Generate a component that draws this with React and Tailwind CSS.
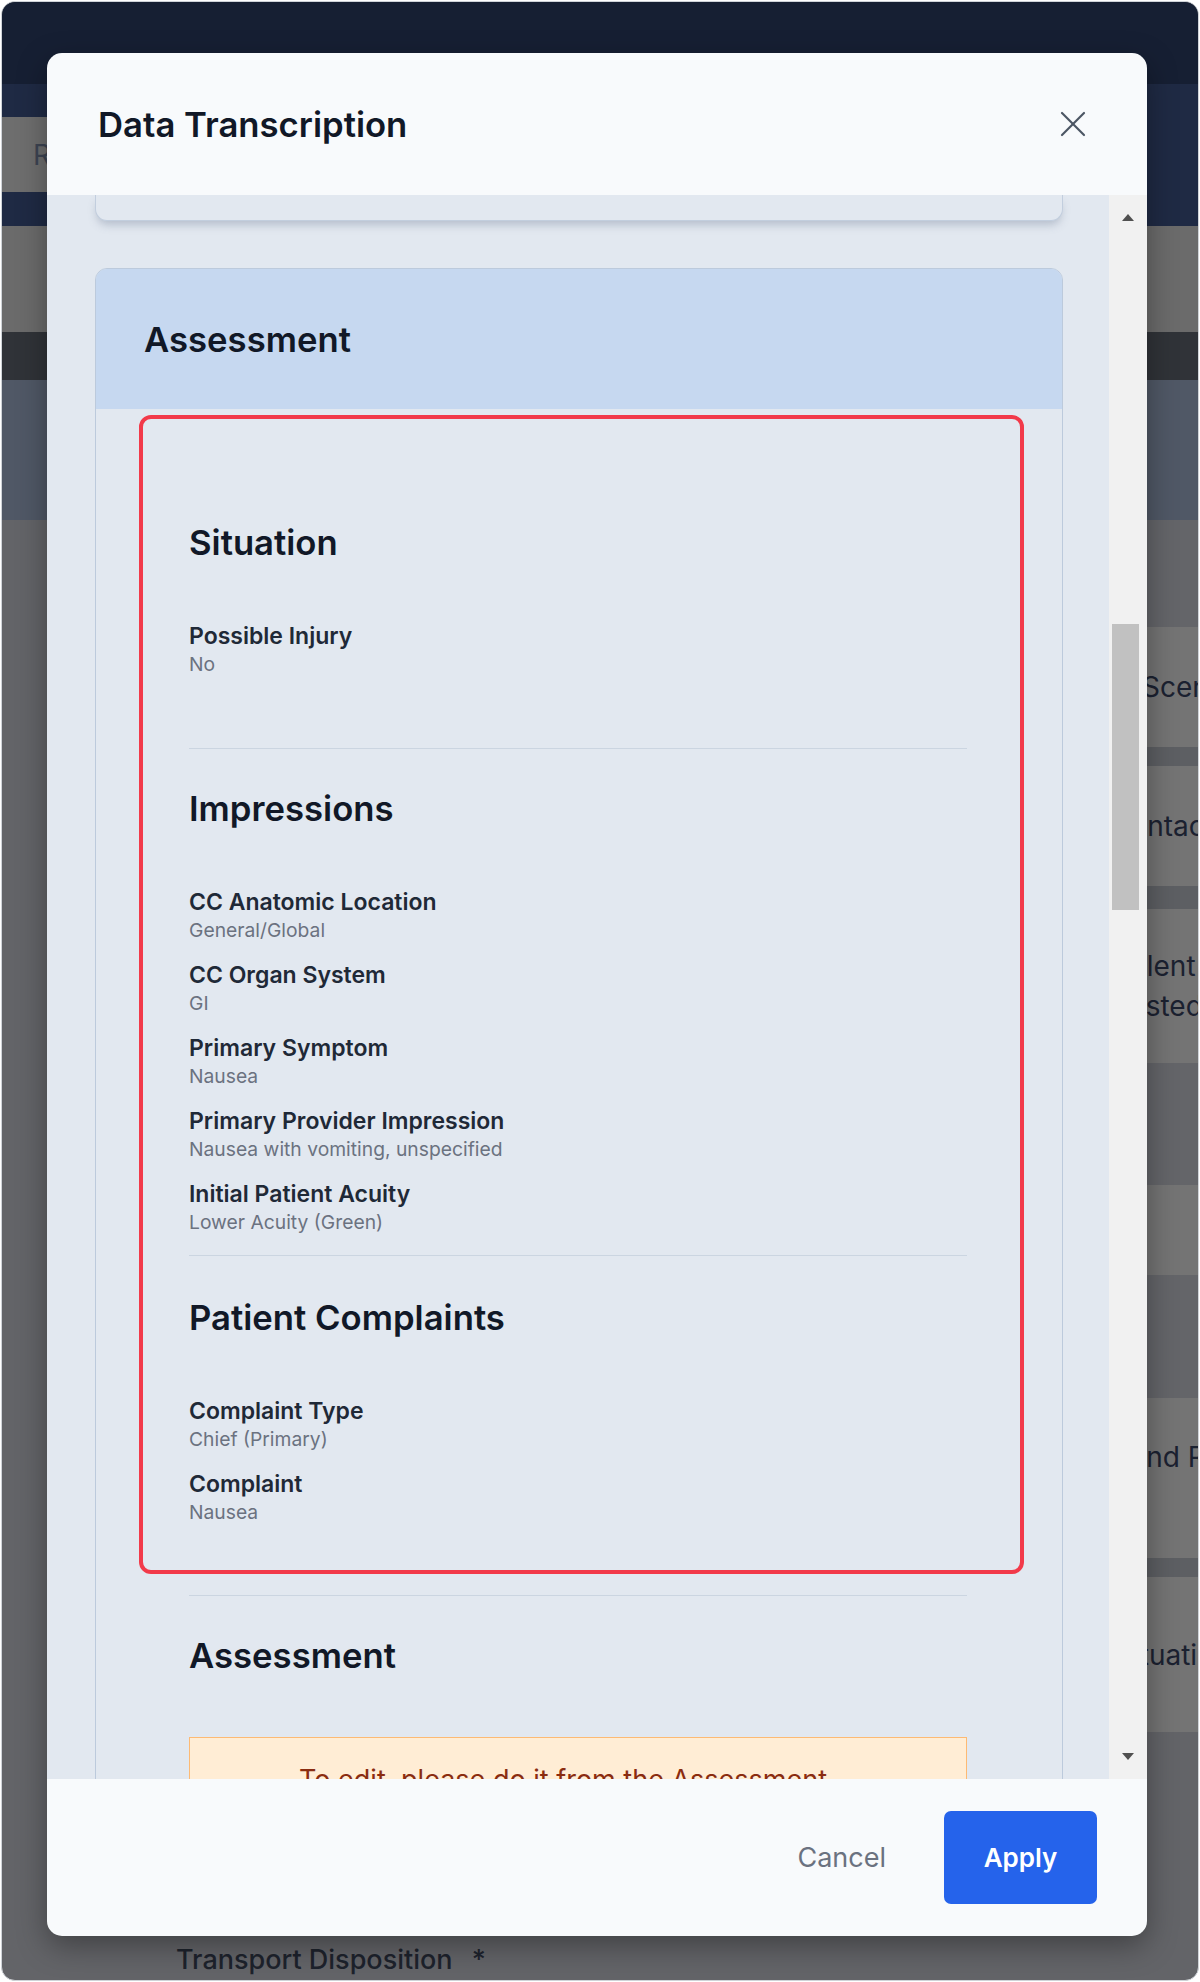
import React from "react";

function Field({ label, value }) {
  return (
    <div className="flex flex-col">
      <div className="text-[23px] font-semibold leading-[30px] text-[#1f2937]">{label}</div>
      <div className="text-[19.3px] leading-[26px] text-[#6b7280]">{value}</div>
    </div>
  );
}

function Heading({ children }) {
  return <div className="text-[34.7px] font-semibold leading-[42px] text-[#111827]">{children}</div>;
}

function BgRow({ light, h, top, children }) {
  return (
    <div className={`${light ? "bg-[#747474]" : "bg-[#646569]"} ${h} flex flex-col ${top ? "justify-start pt-[39px]" : "justify-center"} text-[28px] leading-[40px] text-[#1b2130] whitespace-nowrap overflow-hidden`}>
      {children}
    </div>
  );
}

export default function App() {
  return (
    <div className="w-[1200px] h-[1982px] bg-white p-[1px] font-['Inter',sans-serif]">
      <div className="relative h-full rounded-[14px] border border-[#cfd3d8] overflow-hidden bg-[#636468] flex flex-col">
        {/* background page (under overlay) */}
        <div className="h-[82px] bg-[#161f33] shrink-0" />
        <div className="h-[142px] bg-[#1f2a44] shrink-0 pt-[33px]">
          <div className="w-[300px] h-[75px] bg-[#6e6e6e] flex items-center pl-[31px] text-[28px] text-[#3d4452]">Reports</div>
        </div>
        <div className="h-[106px] bg-[#6b6b6b] shrink-0" />
        <div className="h-[48px] bg-[#303338] shrink-0" />
        <div className="h-[140px] bg-[#505866] shrink-0" />
        <div className="flex-1 flex flex-col">
          <div className="ml-[700px] flex flex-col">
            <BgRow h="h-[107px]" />
            <BgRow light h="h-[120px]"><div className="pl-[440px]">Scene</div></BgRow>
            <div className="h-[19px] bg-[#5d5f63]" />
            <BgRow light h="h-[120px]"><div className="pl-[408px]">Contact</div></BgRow>
            <div className="h-[23px] bg-[#5d5f63]" />
            <BgRow light h="h-[154px]">
              <div className="pl-[420px]">Silent</div>
              <div className="pl-[388px]">Assisted</div>
            </BgRow>
            <BgRow h="h-[122px]" />
            <BgRow light h="h-[90px]" />
            <BgRow h="h-[123px]" />
            <BgRow light top h="h-[160px]"><div className="pl-[421px]">Find R</div></BgRow>
            <div className="h-[19px] bg-[#5d5f63]" />
            <BgRow light h="h-[155px]"><div className="pl-[413px]">Situation</div></BgRow>
          </div>
          <div className="flex-1" />
          <div className="pl-[174px] pb-[3px] text-[27px] font-medium leading-[34px] text-[#1d222c]">
            Transport Disposition <span className="ml-[12px]">*</span>
          </div>
        </div>

        {/* modal */}
        <div className="absolute left-[45px] top-[51px] w-[1100px] h-[1883px] rounded-[15px] bg-[#f8fafc] overflow-hidden flex flex-col shadow-[0_10px_30px_rgba(0,0,0,0.35)]">
          <div className="h-[142px] shrink-0 flex items-center justify-between pl-[51px] pr-[60px]">
            <div className="text-[34.7px] font-semibold text-[#111827] leading-[42px]">Data Transcription</div>
            <svg width="28" height="28" viewBox="0 0 28 28" fill="none" stroke="#4b5563" strokeWidth="2.2" strokeLinecap="round">
              <line x1="3" y1="3" x2="25" y2="25" />
              <line x1="25" y1="3" x2="3" y2="25" />
            </svg>
          </div>

          <div className="flex-1 min-h-0 flex">
            <div className="flex-1 min-w-0 overflow-hidden bg-[#e2e8f0] pl-[48px] pr-[46px]">
              <div className="h-[26px] border-x border-b border-[#c2cede] rounded-b-[12px] bg-[#e2e8f0] shadow-[0_6px_8px_-2px_rgba(100,116,139,0.35)]" />
              <div className="mt-[47px] border border-[#bccadc] rounded-t-[12px] bg-[#e2e8f0]">
                <div className="h-[140px] bg-[#c6d8f0] rounded-t-[11px] flex items-center pl-[48px] text-[34.7px] font-semibold text-[#111827]">
                  Assessment
                </div>
                <div className="pl-[93px] pr-[95px] pt-[6px] pb-[40px]">
                  <div className="-ml-[50px] -mr-[57px] border-[4px] border-[#f23a4a] rounded-[12px] pl-[46px] pr-[53px] pt-[102px] pb-[45px]">
                    <Heading>Situation</Heading>
                    <div className="mt-[58px] flex flex-col gap-[17px]">
                      <Field label="Possible Injury" value="No" />
                    </div>
                    <div className="mt-[71px] h-px bg-[#cbd5e1]" />
                    <div className="mt-[38px]"><Heading>Impressions</Heading></div>
                    <div className="mt-[58px] flex flex-col gap-[17px]">
                      <Field label="CC Anatomic Location" value="General/Global" />
                      <Field label="CC Organ System" value="GI" />
                      <Field label="Primary Symptom" value="Nausea" />
                      <Field label="Primary Provider Impression" value="Nausea with vomiting, unspecified" />
                      <Field label="Initial Patient Acuity" value="Lower Acuity (Green)" />
                    </div>
                    <div className="mt-[20px] h-px bg-[#cbd5e1]" />
                    <div className="mt-[40px]"><Heading>Patient Complaints</Heading></div>
                    <div className="mt-[58px] flex flex-col gap-[17px]">
                      <Field label="Complaint Type" value="Chief (Primary)" />
                      <Field label="Complaint" value="Nausea" />
                    </div>
                  </div>
                  <div className="mt-[21px] h-px bg-[#cbd5e1]" />
                  <div className="mt-[38px]"><Heading>Assessment</Heading></div>
                  <div className="mt-[61px] border-[1.5px] border-[#fdba74] bg-[#ffedd5] pt-[25px] pb-[22px] pl-[20px] pr-[50px] text-center text-[27px] leading-[34px] text-[#8a2c10]">
                    To edit, please do it from the Assessment
                    <br />
                    section of the chart.
                  </div>
                </div>
              </div>
            </div>
            {/* scrollbar */}
            <div className="w-[38px] shrink-0 bg-[#f1f1f1] flex flex-col items-start pb-[19px]">
              <div className="pt-[19px] w-full flex justify-center">
                <svg width="12" height="7" viewBox="0 0 12 7"><polygon points="6,0 12,7 0,7" fill="#505050" /></svg>
              </div>
              <div className="mt-[403px] ml-[3px] w-[27px] h-[286px] bg-[#c1c1c1]" />
              <div className="flex-1" />
              <div className="w-full flex justify-center">
                <svg width="12" height="7" viewBox="0 0 12 7"><polygon points="0,0 12,0 6,7" fill="#505050" /></svg>
              </div>
            </div>
          </div>

          <div className="h-[157px] shrink-0 flex items-center justify-end pr-[50px] gap-[58px]">
            <button className="text-[27px] text-[#6b7280] leading-[34px]">Cancel</button>
            <button className="w-[153px] h-[93px] rounded-[7px] bg-[#2563eb] text-white text-[26px] font-semibold">Apply</button>
          </div>
        </div>
      </div>
    </div>
  );
}
